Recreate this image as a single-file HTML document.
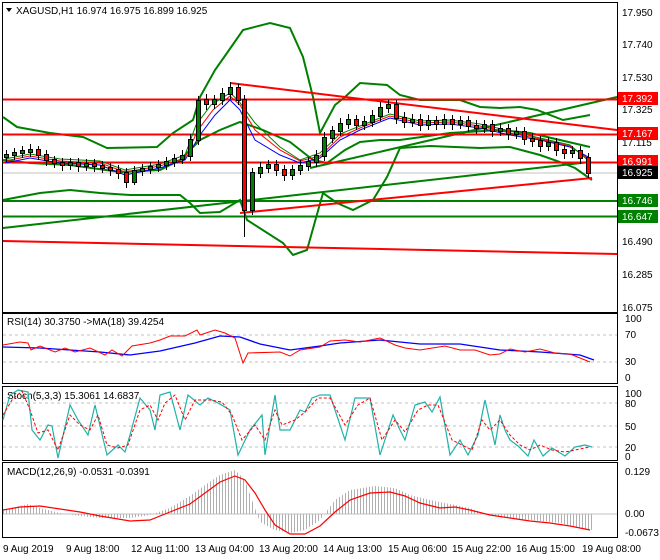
<!DOCTYPE html><html><head><style>
body{margin:0;background:#fff;width:660px;height:560px;overflow:hidden;font-family:"Liberation Sans",sans-serif}
svg{position:absolute;left:0;top:0}
text{font-family:"Liberation Sans",sans-serif;font-size:10px;fill:#000}
</style></head><body>
<svg width="660" height="560" viewBox="0 0 660 560">
<defs><pattern id="hp" width="3" height="10" patternUnits="userSpaceOnUse"><rect x="0" width="1" height="10" fill="#b0b0b0"/></pattern></defs>
<rect width="660" height="560" fill="#fff"/>
<g fill="none" stroke="#000" stroke-width="1">
<rect x="2.5" y="2.5" width="615" height="310"/>
<rect x="2.5" y="313.5" width="615" height="70"/>
<rect x="2.5" y="386.5" width="615" height="74"/>
<rect x="2.5" y="462.5" width="615" height="75"/>
</g>
<line x1="3" y1="173" x2="617" y2="173" stroke="#c0c0c0"/>
<g fill="none" stroke="#008000" stroke-width="2">
<polyline points="3,117 17,127 50,133 83,137 107,148 157,147 173,133 193,120 200,97 215,70 227,53 243,30 270,23 290,28 303,57 313,97 320,133 335,105 345,97 360,83 387,85 400,95 420,100 460,100 480,107 500,108 520,107 537,110 563,120 590,115"/>
<polyline points="3,160 30,163 70,165 120,172 160,170 180,160 200,140 220,130 240,122 263,130 290,142 313,160 327,163 345,150 360,142 380,140 400,140 450,133 500,130 530,133 560,140 590,147"/>
<polyline points="3,200 40,193 70,190 100,193 130,195 155,195 180,195 190,203 200,213 220,212 240,200 247,220 283,243 293,255 307,250 323,193 337,203 353,210 373,200 387,177 400,148 430,146 480,148 510,147 540,155 560,162 575,168 592,180"/>
<line x1="3" y1="228" x2="590" y2="162"/>
<line x1="310" y1="168" x2="617" y2="97"/>
<line x1="3" y1="201" x2="617" y2="201"/>
<line x1="3" y1="216.5" x2="617" y2="216.5"/>
</g>
<g fill="none" stroke="#ff0000" stroke-width="2">
<line x1="3" y1="99.5" x2="617" y2="99.5"/>
<line x1="3" y1="134.5" x2="617" y2="134.5"/>
<line x1="3" y1="162.5" x2="617" y2="162.5"/>
<line x1="230" y1="83" x2="617" y2="130"/>
<line x1="3" y1="241" x2="617" y2="254"/>
<line x1="240" y1="213" x2="592" y2="178"/>
</g>
<g fill="none" stroke-width="1">
<polyline stroke="#0000ff" points="5,163 30,158 60,163 100,165 125,175 160,168 185,160 200,135 215,115 230,100 240,110 255,140 280,155 300,163 320,158 340,140 360,130 390,118 420,125 450,124 480,128 510,135 540,140 570,147 590,158"/>
<polyline stroke="#ff0000" points="5,161 30,156 60,161 100,163 125,172 160,166 185,158 198,130 213,110 230,96 240,105 255,130 280,150 300,161 320,156 340,137 360,128 390,116 420,123 450,122 480,126 510,133 540,139 570,146 590,160"/>
<polyline stroke="#008000" points="5,159 30,154 60,159 100,161 125,170 160,164 185,155 196,125 211,105 230,93 238,100 255,123 280,147 300,160 320,153 340,134 360,126 390,114 420,121 450,120 480,124 510,131 540,138 570,145 590,162"/>
</g>
<!-- candles: wicks -->
<path fill="none" stroke="#000" stroke-width="1" d="M6.5 150V162M14.5 148V160M22.5 146V158M30.5 144V157M38.5 146V160M46.5 150V166M54.5 156V168M62.5 158V171M70.5 158V170M78.5 158V172M86.5 159V171M94.5 159V172M102.5 161V173M110.5 163V176M118.5 165V179M126.5 168V188M134.5 166V185M142.5 164V176M150.5 162V174M158.5 160V172M166.5 157V170M174.5 154V167M182.5 150V164M190.5 134V161M198.5 96V145M206.5 94V110M214.5 95V109M222.5 88V105M230.5 82V99M238.5 84V105M244.5 95V237M252.5 168V215M260.5 162V178M268.5 160V173M276.5 160V176M284.5 165V181M292.5 165V180M300.5 160V175M308.5 157V171M316.5 150V167M324.5 132V161M332.5 126V143M340.5 118V136M348.5 114V129M356.5 115V130M364.5 116V130M372.5 110V127M380.5 102V121M388.5 100V113M396.5 100V124M404.5 112V128M412.5 114V127M420.5 114V131M428.5 115V130M436.5 116V130M444.5 114V129M452.5 115V130M460.5 116V129M468.5 116V132M476.5 120V134M484.5 120V133M492.5 120V137M500.5 123V136M508.5 124V140M516.5 127V139M524.5 127V145M532.5 133V147M540.5 136V152M548.5 137V151M556.5 138V156M564.5 145V159M572.5 146V158M580.5 146V164M588.5 153V178"/>
<path fill="none" stroke="#000" stroke-width="5" d="M38.5 149V156M46.5 154V161M54.5 159V164M62.5 162V166M78.5 162V167M94.5 163V167M102.5 165V169M110.5 167V171M118.5 169V174M126.5 172V183M206.5 99V105M238.5 87V101M244.5 99V211M276.5 164V171M284.5 169V176M356.5 119V126M396.5 104V119M404.5 117V123M420.5 119V126M436.5 120V125M452.5 119V125M468.5 120V127M476.5 125V129M492.5 124V132M508.5 128V135M524.5 131V140M532.5 138V142M540.5 140V147M556.5 142V151M564.5 149V154M580.5 150V159M588.5 157V174 M6.5 154V158M14.5 152V156M22.5 150V154M30.5 149V153M70.5 162V166M86.5 163V167M134.5 170V183M142.5 168V172M150.5 166V170M158.5 164V168M166.5 161V166M174.5 158V163M182.5 155V160M190.5 139V157M198.5 100V141M214.5 99V105M222.5 93V101M230.5 87V95M252.5 172V211M260.5 167V174M268.5 164V169M292.5 169V176M300.5 165V171M308.5 161V167M316.5 155V163M324.5 137V157M332.5 130V139M340.5 123V132M348.5 119V125M364.5 121V126M372.5 115V123M380.5 107V117M388.5 104V109M412.5 119V123M428.5 120V126M444.5 119V125M460.5 120V125M484.5 124V129M500.5 128V132M516.5 131V135M548.5 142V147M572.5 150V154"/>
<path fill="none" stroke="#ff0000" stroke-width="3" d="M38.5 150V155M46.5 155V160M54.5 160V163M62.5 163V165M78.5 163V166M94.5 164V166M102.5 166V168M110.5 168V170M118.5 170V173M126.5 173V182M206.5 100V104M238.5 88V100M244.5 100V210M276.5 165V170M284.5 170V175M356.5 120V125M396.5 105V118M404.5 118V122M420.5 120V125M436.5 121V124M452.5 120V124M468.5 121V126M476.5 126V128M492.5 125V131M508.5 129V134M524.5 132V139M532.5 139V141M540.5 141V146M556.5 143V150M564.5 150V153M580.5 151V158M588.5 158V173"/>
<path fill="none" stroke="#008000" stroke-width="3" d="M6.5 155V157M14.5 153V155M22.5 151V153M30.5 150V152M70.5 163V165M86.5 164V166M134.5 171V182M142.5 169V171M150.5 167V169M158.5 165V167M166.5 162V165M174.5 159V162M182.5 156V159M190.5 140V156M198.5 101V140M214.5 100V104M222.5 94V100M230.5 88V94M252.5 173V210M260.5 168V173M268.5 165V168M292.5 170V175M300.5 166V170M308.5 162V166M316.5 156V162M324.5 138V156M332.5 131V138M340.5 124V131M348.5 120V124M364.5 122V125M372.5 116V122M380.5 108V116M388.5 105V108M412.5 120V122M428.5 121V125M444.5 120V124M460.5 121V124M484.5 125V128M500.5 129V131M516.5 132V134M548.5 143V146M572.5 151V153"/>
<g>
<text x="622" y="16">17.950</text><text x="622" y="48">17.740</text><text x="622" y="81">17.530</text>
<text x="622" y="113">17.325</text><text x="622" y="146">17.115</text>
<text x="622" y="245">16.490</text><text x="622" y="278">16.285</text><text x="622" y="311">16.075</text>
<rect x="618" y="92" width="40" height="13" fill="#ff0000"/><text x="622" y="102" style="fill:#fff">17.392</text>
<rect x="618" y="127" width="40" height="13" fill="#ff0000"/><text x="622" y="137" style="fill:#fff">17.167</text>
<rect x="618" y="155" width="40" height="13" fill="#ff0000"/><text x="622" y="165" style="fill:#fff">16.991</text>
<rect x="618" y="166" width="40" height="13" fill="#000"/><text x="622" y="176" style="fill:#fff">16.925</text>
<rect x="618" y="194" width="40" height="13" fill="#008000"/><text x="622" y="204" style="fill:#fff">16.746</text>
<rect x="618" y="210" width="40" height="13" fill="#008000"/><text x="622" y="220" style="fill:#fff">16.647</text>
</g>
<polygon points="6,8 12,8 9,12" fill="#000"/>
<text x="16" y="14">XAGUSD,H1  16.974 16.975 16.899 16.925</text>
<g stroke="#c0c0c0" stroke-dasharray="3,3"><line x1="3" y1="335" x2="617" y2="335"/><line x1="3" y1="362" x2="617" y2="362"/>
<line x1="3" y1="403" x2="617" y2="403"/><line x1="3" y1="426" x2="617" y2="426"/><line x1="3" y1="447" x2="617" y2="447"/></g>
<line x1="3" y1="514" x2="617" y2="514" stroke="#c0c0c0"/>
<text x="7" y="325">RSI(14) 30.3750  -&gt;MA(18) 39.4254</text>
<text x="625" y="322">100</text><text x="625" y="338">70</text><text x="625" y="365">30</text><text x="625" y="381">0</text>
<polyline fill="none" stroke="#0000ff" stroke-width="1.3" points="3,347 40,348 100,352 130,355 160,351 195,343 220,336 240,337 260,344 290,350 320,346 340,343 380,340 420,344 460,344 500,350 540,352 580,355 594,360"/>
<polyline fill="none" stroke="#ff0000" points="3,345 20,342 28,343 31,350 40,346 55,352 65,348 75,352 90,348 105,355 112,350 122,356 132,346 150,343 160,340 170,336 185,336 197,330 200,335 215,330 225,333 235,338 243,363 248,353 280,352 290,356 300,350 320,347 330,341 345,340 360,342 380,338 395,345 405,348 420,350 445,346 460,350 475,350 490,355 500,354 510,349 525,352 540,349 555,353 570,354 580,358 590,362"/>
<text x="7" y="399">Stoch(5,3,3) 15.3061 14.6837</text>
<text x="625" y="397">100</text><text x="625" y="407">80</text><text x="625" y="430">50</text><text x="625" y="451">20</text><text x="625" y="460">0</text>
<polyline fill="none" stroke="#20b2aa" stroke-width="1.2" points="3,420 10,395 18,390 28,392 32,430 40,440 48,425 52,426 58,458 70,405 78,420 88,435 95,405 107,455 118,445 125,452 130,435 140,398 150,410 155,430 160,395 170,392 180,430 188,395 200,405 208,398 218,403 230,410 238,455 250,430 262,415 265,455 275,395 280,430 290,430 300,410 305,412 312,398 320,395 330,395 345,440 355,398 370,398 380,455 393,415 400,430 405,440 415,405 425,402 432,412 440,397 450,455 460,440 468,455 478,435 485,400 495,445 500,415 505,430 510,440 518,446 528,456 534,440 543,456 552,448 565,456 575,447 585,445 592,447"/>
<polyline fill="none" stroke="#ff0000" stroke-dasharray="3,2" points="3,415 12,400 22,391 30,410 38,433 48,430 58,450 70,415 80,425 90,430 98,415 107,445 118,448 128,445 140,410 150,405 158,420 165,403 175,395 185,420 195,400 210,400 222,402 232,415 242,440 255,425 265,440 275,410 282,425 295,420 305,412 318,398 330,398 345,425 358,405 370,398 382,440 395,420 405,432 418,410 428,405 438,405 452,440 462,445 472,450 482,420 490,430 500,420 510,435 520,445 530,450 540,445 552,450 565,452 575,450 590,447"/>
<text x="7" y="475">MACD(12,26,9) -0.0531 -0.0391</text>
<text x="625" y="475">0.129</text><text x="625" y="517">0.00</text><text x="625" y="536">-0.0673</text>
<polygon fill="url(#hp)" points="3,514 3,510 20,506 28,504 40,508 60,513 80,516 100,518 130,518 150,515 170,508 190,496 205,485 220,475 235,470 245,480 252,500 260,522 275,530 290,533 305,530 320,520 335,500 350,490 375,486 395,488 410,495 430,500 455,505 470,508 490,516 530,520 560,523 592,530 592,514"/>
<polyline fill="none" stroke="#ff0000" stroke-width="1.2" points="3,510 20,507 40,506 60,509 80,512 100,516 130,521 150,520 170,512 190,504 205,493 220,482 235,476 245,480 255,493 265,510 275,525 290,534 305,534 320,526 335,512 350,500 370,493 390,492 405,496 420,503 440,508 455,507 470,510 490,515 510,518 530,521 550,523 570,526 590,530"/>
<g>
<text x="3" y="552">9 Aug 2019</text><text x="66" y="552">9 Aug 18:00</text><text x="131" y="552">12 Aug 11:00</text>
<text x="195" y="552">13 Aug 04:00</text><text x="259" y="552">13 Aug 20:00</text><text x="323" y="552">14 Aug 13:00</text>
<text x="388" y="552">15 Aug 06:00</text><text x="452" y="552">15 Aug 22:00</text><text x="516" y="552">16 Aug 15:00</text><text x="582" y="552">19 Aug 08:00</text>
</g>
</svg>
</body></html>
